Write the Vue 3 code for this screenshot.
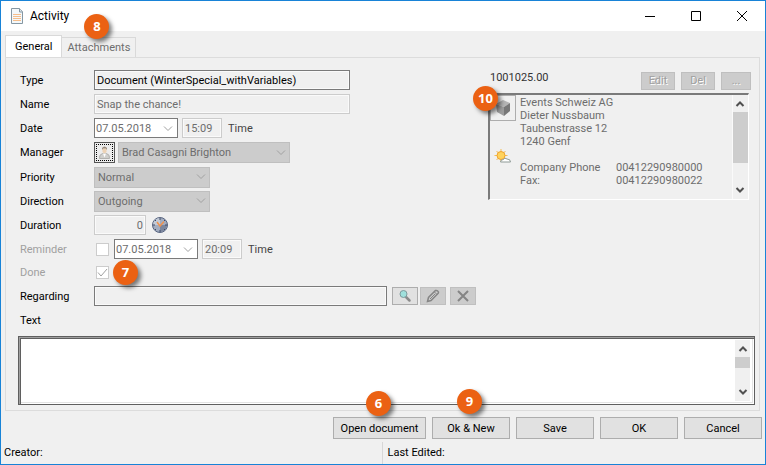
<script setup>
import { ref } from 'vue'

const tab = ref('general')
const name = ref('Snap the chance!')
const type = ref('Document (WinterSpecial_withVariables)')
const date = ref('07.05.2018')
const time = ref('15:09')
const manager = ref('Brad Casagni Brighton')
const priority = ref('Normal')
const direction = ref('Outgoing')
const duration = ref('0')
const reminder = ref(false)
const reminderDate = ref('07.05.2018')
const reminderTime = ref('20:09')
const done = ref(true)
const regarding = ref('')
const text = ref('')

const address = ['Events Schweiz AG', 'Dieter Nussbaum', 'Taubenstrasse 12', '1240 Genf']
const phones = [
  { label: 'Company Phone', number: '00412290980000' },
  { label: 'Fax:', number: '00412290980022' }
]

const actions = [
  { label: 'Open document', badge: 6, wide: true },
  { label: 'Ok & New', badge: 9 },
  { label: 'Save' },
  { label: 'OK' },
  { label: 'Cancel' }
]
</script>

<template>
  <div class="window">
    <header class="titlebar">
      <svg class="doc-icon" width="14" height="18" viewBox="0 0 14 18">
        <path d="M1.5 1.5h8l3 3v12h-11z" fill="#f4f8fa" stroke="#8597a3" />
        <path d="M9.5 1.5v3.5h3" fill="#dce6ec" stroke="#8597a3" />
        <path d="M3 7.5h8M3 9.5h8M3 11.5h8M3 13.5h8" stroke="#f6bd8a" />
      </svg>
      <h1>Activity</h1>
      <div class="win-buttons">
        <button aria-label="Minimize">
          <svg width="10" height="10"><path d="M0 5.5h10" stroke="#000" /></svg>
        </button>
        <button aria-label="Maximize">
          <svg width="10" height="10"><path d="M.5.5h9v9h-9z" stroke="#000" fill="none" /></svg>
        </button>
        <button aria-label="Close">
          <svg width="10" height="10"><path d="M0 0l10 10M10 0L0 10" stroke="#000" /></svg>
        </button>
      </div>
    </header>

    <nav class="tabs">
      <button class="tab" :class="{ active: tab === 'general' }" @click="tab = 'general'">General</button>
      <button class="tab" :class="{ active: tab === 'attachments' }" @click="tab = 'attachments'">
        Attachments
        <span class="badge badge-tab">8</span>
      </button>
    </nav>

    <main class="panel">
      <div class="columns">
        <form class="form" @submit.prevent>
          <div class="row">
            <label for="type">Type</label>
            <input id="type" v-model="type" class="field long strong" readonly />
          </div>
          <div class="row">
            <label for="name">Name</label>
            <input id="name" v-model="name" class="field long" readonly />
          </div>
          <div class="row">
            <label for="date">Date</label>
            <div class="datebox">
              <input id="date" v-model="date" readonly />
              <button aria-label="Pick date">
                <svg width="10" height="6"><path d="M1 .5l4 4 4-4" /></svg>
              </button>
            </div>
            <input id="time" v-model="time" class="field time" readonly />
            <label for="time" class="unit">Time</label>
          </div>
          <div class="row row-manager">
            <label for="manager">Manager</label>
            <button class="person" aria-label="Select manager">
              <svg width="13" height="15" viewBox="0 0 13 15">
                <path d="M1.5 13.5q-.5-4 3-5h4q3.500 1 3 5z" fill="#cfcfcc" stroke="#b0b0ad" />
                <path d="M5 8.500h3l-1.500 4z" fill="#fff" />
                <path d="M4.500 3.500h4V7q-2 2.500-4 0z" fill="#ecd2b4" />
                <path d="M4 5V3q2.500-3 5 0v2L8 3.500H5z" fill="#98897a" />
              </svg>
            </button>
            <div class="combo combo-long">
              <select id="manager" v-model="manager">
                <option>Brad Casagni Brighton</option>
              </select>
              <svg width="10" height="6"><path d="M1 .5l4 4 4-4" /></svg>
            </div>
          </div>
          <div class="row">
            <label for="priority">Priority</label>
            <div class="combo">
              <select id="priority" v-model="priority">
                <option>Normal</option>
              </select>
              <svg width="10" height="6"><path d="M1 .5l4 4 4-4" /></svg>
            </div>
          </div>
          <div class="row">
            <label for="direction">Direction</label>
            <div class="combo">
              <select id="direction" v-model="direction">
                <option>Outgoing</option>
              </select>
              <svg width="10" height="6"><path d="M1 .5l4 4 4-4" /></svg>
            </div>
          </div>
          <div class="row">
            <label for="duration">Duration</label>
            <input id="duration" v-model="duration" class="field duration" readonly />
            <svg class="clock" width="18" height="18" viewBox="0 0 18 18">
              <circle cx="9" cy="9" r="7.5" fill="#a3adc0" stroke="#56637f" />
              <path d="M9 9V2a7 7 0 0 0-7 7z" fill="#c3cbd8" />
              <path d="M9 9h7a7 7 0 0 1-7 7z" fill="#7c879e" />
              <path d="M9 2v2M9 14v2M2 9h2M14 9h2M4 4l1 1M14 4l-1 1M4 14l1-1M14 14l-1-1" stroke="#3f4b66" />
              <path d="M6 6l3 4 4-4.500" fill="none" stroke="#f0924e" stroke-width="1.500" />
            </svg>
          </div>
          <div class="row">
            <label for="reminder" class="off">Reminder</label>
            <input id="reminder" v-model="reminder" type="checkbox" class="tick" disabled />
            <div class="datebox">
              <input v-model="reminderDate" aria-label="Reminder date" readonly />
              <button aria-label="Pick reminder date">
                <svg width="10" height="6"><path d="M1 .5l4 4 4-4" /></svg>
              </button>
            </div>
            <input id="reminder-time" v-model="reminderTime" class="field time" readonly />
            <label for="reminder-time" class="unit">Time</label>
          </div>
          <div class="row row-done">
            <label for="done" class="off">Done</label>
            <div class="tickbox">
              <input id="done" v-model="done" type="checkbox" class="tick" disabled />
              <svg v-if="done" width="13" height="13"><path d="M2 6.5l3 3.5 6-7" /></svg>
              <span class="badge badge-done">7</span>
            </div>
          </div>
          <div class="row">
            <label for="regarding">Regarding</label>
            <input id="regarding" v-model="regarding" class="field strong regarding" readonly />
            <button class="tool live" aria-label="Search">
              <svg width="14" height="14" viewBox="0 0 14 14">
                <path d="M8 8l3.500 3.500" stroke="#8b8b8b" stroke-width="2.500" stroke-linecap="round" />
                <circle cx="5.5" cy="5" r="3.5" fill="#9fe0dc" stroke="#7d9a9c" />
              </svg>
            </button>
            <button class="tool" aria-label="Edit regarding">
              <svg width="14" height="14" viewBox="0 0 14 14" fill="none" stroke="#858585">
                <path d="M1.5 12.5l1-4 7-7q2-.5 3 1.500 0 1-.5 1.500l-7 7z" stroke-width="1.500" />
                <path d="M8.500 3l2.500 2.500M4 10l5-5" />
              </svg>
            </button>
            <button class="tool tool-clear" aria-label="Clear regarding">
              <svg width="14" height="14"><path d="M2 2l10 10M12 2L2 12" stroke="#858585" stroke-width="2" /></svg>
            </button>
          </div>
          <div class="row">
            <label for="text">Text</label>
          </div>
        </form>

        <section class="contact">
          <div class="contact-head">
            <span class="number">1001025.00</span>
            <button class="small">Edit</button>
            <button class="small">Del</button>
            <button class="small dots">...</button>
          </div>
          <div class="card">
            <span class="badge badge-card">10</span>
            <div class="card-icons">
              <button class="cube" aria-label="Open company">
                <svg width="18" height="18" viewBox="0 0 18 18">
                  <path d="M2 5l7-4 7 3-6 4z" fill="#b4b4b4" />
                  <path d="M2 5l8 3v9l-7-4z" fill="#9c9c9c" />
                  <path d="M10 8l6-4v8l-6 5z" fill="#777" />
                </svg>
              </button>
              <svg class="weather" width="18" height="16" viewBox="0 0 18 16">
                <path d="M7 0v13M.5 6.5h13M2.5 2l9 9M11.5 2l-9 9" stroke="#f3bd56" />
                <circle cx="7" cy="6.5" r="4" fill="#ffd35c" stroke="#efa22d" />
                <path d="M6.5 13q0-2.500 3-2.500 1-2.500 3.500-.5 3.500 0 3.500 3z" fill="#fff" stroke="#8e9a96" />
              </svg>
            </div>
            <div class="details">
              <p v-for="line in address" :key="line">{{ line }}</p>
              <dl class="phones">
                <template v-for="phone in phones" :key="phone.label">
                  <dt>{{ phone.label }}</dt>
                  <dd>{{ phone.number }}</dd>
                </template>
              </dl>
            </div>
            <div class="scrollbar">
              <svg width="10" height="8"><path d="M1.5 6L5 2.5 8.5 6" /></svg>
              <div class="track"><div class="thumb thumb-card"></div></div>
              <svg width="10" height="8"><path d="M1.5 2L5 5.5 8.5 2" /></svg>
            </div>
          </div>
        </section>
      </div>

      <div class="memo">
        <textarea id="text" v-model="text"></textarea>
        <div class="scrollbar">
          <svg width="10" height="8"><path d="M1.5 6L5 2.5 8.5 6" /></svg>
          <div class="track"><div class="thumb thumb-memo"></div></div>
          <svg width="10" height="8"><path d="M1.5 2L5 5.5 8.5 2" /></svg>
        </div>
      </div>
    </main>

    <div class="actions">
      <button v-for="action in actions" :key="action.label" class="action" :class="{ wide: action.wide }">
        {{ action.label }}
        <span v-if="action.badge" class="badge badge-action">{{ action.badge }}</span>
      </button>
    </div>

    <footer class="status">
      <span>Creator:</span>
      <span>Last Edited:</span>
    </footer>
  </div>
</template>

<style>
body {
  margin: 0;
}
</style>

<style scoped>
* {
  box-sizing: border-box;
}

.window {
  display: flex;
  flex-direction: column;
  min-height: 100vh;
  border: 1px solid #1883d7;
  background: #f0f0f0;
  color: #000;
  font-family: Roboto, "Liberation Sans", sans-serif;
  font-size: 11px;
  line-height: 13px;
}

button,
input,
select,
textarea {
  margin: 0;
  padding: 0;
  border: 0;
  border-radius: 0;
  background: none;
  color: inherit;
  font: inherit;
}

.titlebar {
  display: flex;
  align-items: center;
  height: 30px;
  padding-left: 9px;
  background: #fff;
}

h1 {
  flex: 1;
  margin: 0 0 0 6px;
  font-size: 12px;
  font-weight: 400;
}

.win-buttons {
  display: flex;
}

.win-buttons button {
  display: flex;
  align-items: center;
  justify-content: center;
  width: 46px;
  height: 30px;
}

.tabs {
  display: flex;
  align-items: flex-end;
  height: 26px;
  padding-left: 4px;
}

.tab {
  position: relative;
  height: 20px;
  padding: 0 5px;
  border: 1px solid #d9d9d9;
  border-bottom: 0;
  border-left: 0;
  color: #6d6d6d;
}

.tab.active {
  height: 22px;
  padding: 0 9px;
  border-left: 1px solid #d9d9d9;
  background: #fff;
  color: #000;
}

.panel {
  display: flex;
  flex: 1;
  flex-direction: column;
  margin: 0 5px 0 4px;
  padding: 10px 4px 5px 12px;
  border: 1px solid #dcdcdc;
}

.columns {
  display: flex;
}

.form {
  flex: 1;
}

.row {
  display: flex;
  align-items: center;
  height: 24px;
}

.row-manager {
  height: 25px;
}

.row-done {
  height: 23px;
}

.row > label:first-child {
  width: 76px;
  padding-left: 2px;
}

.row > label.off {
  color: #a0a0a0;
}

.field {
  height: 20px;
  padding: 0 2px;
  border: 1px solid #ccc;
  box-shadow: inset 0 0 0 1px #fafafa;
  color: #6d6d6d;
}

.field.strong {
  border-color: #7a7a7a;
  color: #000;
}

.long {
  width: 256px;
}

.time {
  width: 40px;
  margin-left: 4px;
}

.unit {
  margin-left: 6px;
  color: #444;
}

.datebox {
  display: flex;
  width: 84px;
  height: 20px;
  border: 1px solid #7a7a7a;
  background: #fff;
  color: #6d6d6d;
}

.datebox input {
  flex: 1;
  min-width: 0;
  padding-left: 1px;
}

.datebox button {
  width: 18px;
}

.datebox path,
.combo path {
  fill: none;
  stroke: #a0a0a0;
}

.person {
  display: flex;
  align-items: center;
  justify-content: center;
  width: 21px;
  height: 21px;
  border: 1px solid #555;
  background: #ececec;
  outline: 1px dotted #000;
  outline-offset: -3px;
}

.combo {
  display: grid;
  align-items: center;
  width: 116px;
  height: 21px;
  border: 1px solid #bfbfbf;
  background: #ccc;
  color: #6d6d6d;
}

.combo-long {
  width: 172px;
  margin-left: 3px;
}

.combo select,
.combo svg {
  grid-area: 1 / 1;
}

.combo select {
  height: 19px;
  padding-left: 3px;
  appearance: none;
}

.combo svg {
  justify-self: end;
  margin-right: 3px;
  pointer-events: none;
}

.duration {
  width: 52px;
  text-align: right;
}

.clock {
  margin-left: 5px;
}

.tick {
  width: 13px;
  height: 13px;
  margin: 0 5px 0 2px;
  border: 1px solid #ccc;
  background: #fff;
  appearance: none;
}

.tickbox {
  position: relative;
  display: grid;
}

.tickbox .tick,
.tickbox svg {
  grid-area: 1 / 1;
}

.tickbox svg {
  margin-left: 2px;
  pointer-events: none;
}

.tickbox path {
  fill: none;
  stroke: #a0a0a0;
}

.regarding {
  width: 293px;
}

.tool {
  display: flex;
  align-items: center;
  justify-content: center;
  width: 26px;
  height: 18px;
  margin-left: 2px;
  border: 1px solid #bfbfbf;
  background: #ccc;
}

.tool.live {
  margin-left: 5px;
  border-color: #adadad;
  background: #e1e1e1;
}

.tool-clear {
  margin-left: 4px;
}

.contact {
  width: 263px;
  margin-right: 4px;
}

.contact-head {
  display: flex;
  align-items: center;
  gap: 6px;
  height: 25px;
  padding-left: 2px;
}

.number {
  flex: 1;
  padding-bottom: 6px;
  color: #333;
}

.small {
  width: 34px;
  height: 18px;
  border: 1px solid #bfbfbf;
  background: #ccc;
  color: #a0a0a0;
  text-shadow: 1px 1px #fff;
}

.small.dots {
  width: 30px;
}

.card {
  position: relative;
  display: flex;
  height: 107px;
  margin-right: 2px;
  border: 1px solid #fff;
  border-top: 2px solid #7a7a7a;
  border-left: 2px solid #7a7a7a;
  color: #6d6d6d;
}

.card-icons {
  display: flex;
  flex-direction: column;
  width: 30px;
}

.cube {
  display: flex;
  align-items: center;
  justify-content: center;
  width: 26px;
  height: 26px;
  border: 1px solid #adadad;
}

.weather {
  margin: 28px 0 0 4px;
}

.details {
  flex: 1;
  padding-top: 1px;
}

.details p {
  margin: 0;
}

.phones {
  display: grid;
  grid-template-columns: 96px 1fr;
  margin: 13px 0 0;
}

.phones dd {
  margin: 0;
}

.scrollbar {
  display: flex;
  flex-direction: column;
  align-items: center;
  width: 15px;
  margin-right: 1px;
  padding: 5px 0;
  background: #f0f0f0;
}

.card .scrollbar {
  border-left: 1px solid #fafafa;
}

.scrollbar path {
  fill: none;
  stroke: #505050;
  stroke-width: 2;
}

.track {
  flex: 1;
  width: 15px;
  padding-top: 4px;
}

.thumb {
  background: #cdcdcd;
}

.thumb-card {
  height: 51px;
}

.thumb-memo {
  height: 11px;
}

.memo {
  display: flex;
  flex: 1;
  min-height: 60px;
  margin-top: 4px;
  border: 1px solid #5f5f5f;
  background: #fff;
  box-shadow: inset 1px 1px #a0a0a0, inset 2px 2px #5f5f5f, inset -1px -1px #fff, inset -2px -2px #e3e3e3;
}

.memo textarea {
  flex: 1;
  margin: 3px;
  resize: none;
  outline: 0;
}

.memo .scrollbar {
  margin: 3px 4px 3px 0;
}

.actions {
  display: flex;
  justify-content: flex-end;
  gap: 6px;
  padding: 6px 3px 3px;
}

.action {
  position: relative;
  width: 78px;
  height: 22px;
  border: 1px solid #adadad;
  background: #e1e1e1;
}

.action.wide {
  width: 93px;
}

.status {
  display: flex;
  height: 22px;
}

.status span {
  flex: 1;
  padding: 4px 3px;
}

.status span + span {
  padding-left: 5px;
  border-left: 1px solid #d7d7d7;
}

.badge {
  position: absolute;
  z-index: 1;
  width: 25px;
  height: 25px;
  border-radius: 50%;
  background: #eb6113;
  box-shadow: 3px 3px 4px rgba(0, 0, 0, 0.5);
  color: #fff;
  font-family: "Open Sans", sans-serif;
  font-size: 13px;
  font-weight: 700;
  line-height: 25px;
  text-align: center;
}

.badge-tab {
  top: -24px;
  left: 22px;
}

.badge-done {
  top: -6px;
  left: 19px;
}

.badge-card {
  top: -9px;
  left: -17px;
}

.badge-action {
  top: -29px;
  left: 24px;
}

.wide .badge-action {
  top: -27px;
  left: 32px;
}
</style>
